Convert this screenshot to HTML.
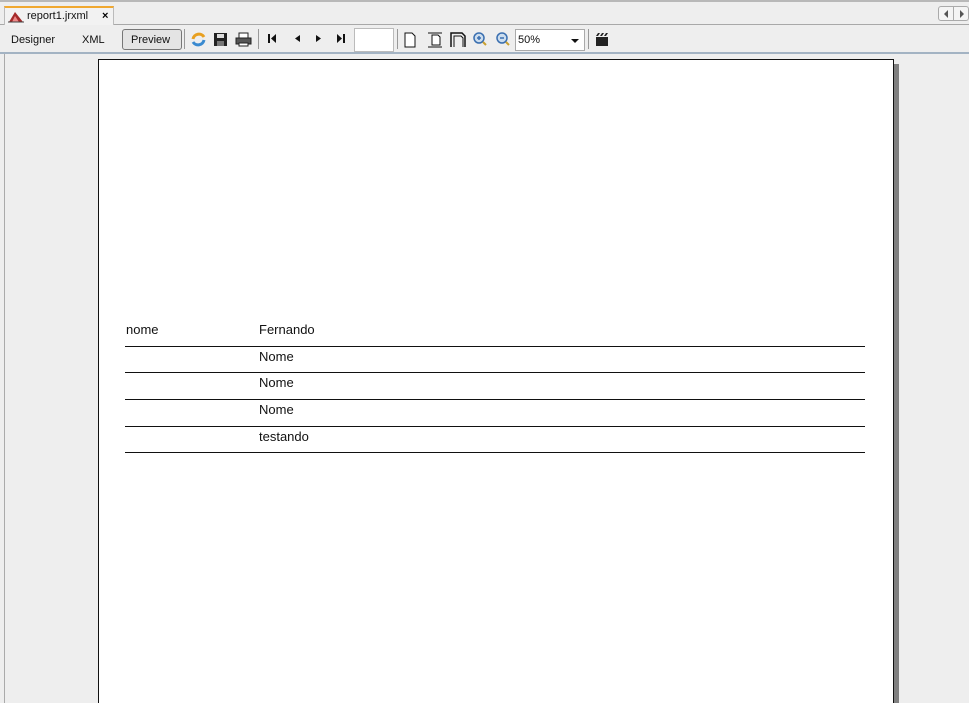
<!DOCTYPE html>
<html><head><style>
*{margin:0;padding:0;box-sizing:border-box}
html,body{width:969px;height:703px;overflow:hidden}
body{background:#eeeeee;font-family:"Liberation Sans",sans-serif;position:relative}
.a{position:absolute}
.t{font-size:11px;color:#111}
.r{font-size:13px;color:#111;position:absolute}
.l{position:absolute;left:125px;width:740px;height:1px;background:#111}
.sep{position:absolute;top:29px;width:1px;height:20px;background:#999}
</style></head><body>
<div class="a" style="left:0;top:0;width:969px;height:2px;background:#b8b8b8"></div>
<div class="a" style="left:0;top:24px;width:969px;height:1px;background:#a8a8a8"></div>
<div class="a" style="left:4px;top:6px;width:110px;height:19px;background:#f2f2f2;border:1px solid #bbb;border-bottom:none;border-top:2px solid #f0a830"></div>
<svg class="a" style="left:8px;top:9px" width="16" height="14"><polygon points="1,13 7,3 15,13" fill="#a52a2a"/><polygon points="4,13 7,7 11,13" fill="#e88"/><line x1="0" y1="13" x2="16" y2="13" stroke="#444"/></svg>
<div class="a t" style="left:27px;top:10px">report1.jrxml</div>
<div class="a" style="left:102px;top:10px;font-size:11px;font-weight:bold">×</div>
<div class="a" style="left:938px;top:6px;width:31px;height:15px;border:1px solid #aaa;border-radius:3px;background:#f4f4f4"></div>
<div class="a" style="left:953px;top:7px;width:1px;height:13px;background:#aaa"></div>
<div class="a" style="left:944px;top:10px;width:0;height:0;border:4px solid transparent;border-right-color:#555;border-left:none"></div>
<div class="a" style="left:960px;top:10px;width:0;height:0;border:4px solid transparent;border-left-color:#555;border-right:none"></div>
<div class="a t" style="left:11px;top:34px">Designer</div>
<div class="a t" style="left:82px;top:34px">XML</div>
<div class="a" style="left:122px;top:29px;width:60px;height:21px;border:1px solid #777;border-radius:3px;background:#e4e4e4"></div>
<div class="a t" style="left:131px;top:34px">Preview</div>
<div class="sep" style="left:184px"></div>
<svg class="a" style="left:190px;top:31px" width="17" height="17"><path d="M3 8a6 6 0 0 1 11-2" stroke="#e8a020" stroke-width="3" fill="none"/><path d="M14 9a6 6 0 0 1-11 2" stroke="#3a8ad0" stroke-width="3" fill="none"/></svg>
<svg class="a" style="left:213px;top:32px" width="15" height="15"><rect x="1" y="1" width="13" height="13" fill="#222"/><rect x="4" y="2" width="7" height="4" fill="#ddd"/><rect x="4" y="9" width="7" height="5" fill="#777"/></svg>
<svg class="a" style="left:235px;top:32px" width="17" height="15"><rect x="4" y="1" width="9" height="5" fill="#fff" stroke="#222"/><rect x="1" y="6" width="15" height="6" fill="#555" stroke="#222"/><rect x="4" y="11" width="9" height="3" fill="#fff" stroke="#222"/></svg>
<div class="sep" style="left:258px"></div>
<svg class="a" style="left:264px;top:33px" width="90" height="12"><rect x="4" y="1" width="2" height="9" fill="#111"/><polygon points="12,1 7,5.5 12,10" fill="#111"/><polygon points="36,2 31,5.5 36,9" fill="#111"/><polygon points="52,2 57,5.5 52,9" fill="#111"/><polygon points="73,1 78,5.5 73,10" fill="#111"/><rect x="79" y="1" width="2" height="9" fill="#111"/></svg>
<div class="a" style="left:354px;top:28px;width:40px;height:24px;background:#fff;border:1px solid #bbb"></div>
<div class="sep" style="left:397px"></div>
<svg class="a" style="left:403px;top:31px" width="66" height="17"><path d="M2 2h7l3 3v11H2z" fill="#fff" stroke="#111"/><path d="M29 4h6l2 2v8h-8z" fill="#fff" stroke="#111"/><line x1="25" y1="2" x2="39" y2="2" stroke="#111"/><line x1="25" y1="16" x2="39" y2="16" stroke="#111"/><path d="M48 16V2h11l3 3v11" fill="none" stroke="#111" stroke-width="1.5"/><path d="M51 16V5h7l2 2v9" fill="none" stroke="#111"/></svg>
<svg class="a" style="left:472px;top:31px" width="40" height="17"><circle cx="7" cy="7" r="5" fill="#cde" stroke="#3a6fb0" stroke-width="1.5"/><path d="M5 7h4M7 5v4" stroke="#3a6fb0" stroke-width="1.5"/><path d="M11 11l3 3" stroke="#c9a030" stroke-width="2"/><circle cx="30" cy="7" r="5" fill="#cde" stroke="#3a6fb0" stroke-width="1.5"/><path d="M28 7h4" stroke="#3a6fb0" stroke-width="1.5"/><path d="M34 11l3 3" stroke="#c9a030" stroke-width="2"/></svg>
<div class="a" style="left:515px;top:29px;width:70px;height:22px;background:#fff;border:1px solid #aaa"></div>
<div class="a t" style="left:518px;top:34px">50%</div>
<div class="a" style="left:571px;top:39px;border:4px solid transparent;border-top:4px solid #111;border-bottom:none"></div>
<div class="sep" style="left:588px"></div>
<svg class="a" style="left:595px;top:32px" width="14" height="15"><rect x="1" y="5" width="12" height="9" fill="#222"/><path d="M1 4l2-3h2l-2 3zM5 4l2-3h2l-2 3zM9 4l2-3h2l-2 3z" fill="#222"/></svg>
<div class="a" style="left:0;top:52px;width:969px;height:2px;background:#a3b3c3"></div>
<div class="a" style="left:4px;top:54px;width:1px;height:649px;background:#aaa"></div>
<div class="a" style="left:893px;top:64px;width:6px;height:639px;background:#808080"></div>
<div class="a" style="left:98px;top:59px;width:796px;height:644px;background:#fff;border:1px solid #111;border-bottom:none"></div>
<div class="r" style="left:126px;top:322px">nome</div>
<div class="r" style="left:259px;top:322px">Fernando</div>
<div class="l" style="top:346px"></div>
<div class="r" style="left:259px;top:349px">Nome</div>
<div class="l" style="top:372px"></div>
<div class="r" style="left:259px;top:375px">Nome</div>
<div class="l" style="top:399px"></div>
<div class="r" style="left:259px;top:402px">Nome</div>
<div class="l" style="top:426px"></div>
<div class="r" style="left:259px;top:429px">testando</div>
<div class="l" style="top:452px"></div>
</body></html>
